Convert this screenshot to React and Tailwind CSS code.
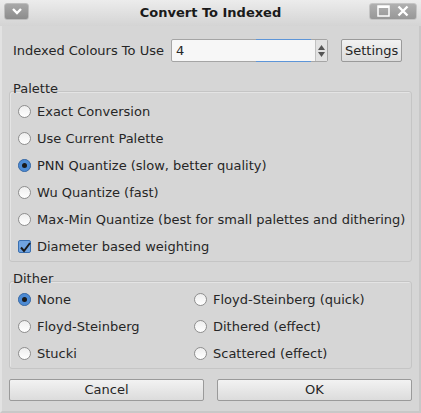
import React from "react";

function Radio({ checked }) {
  return (
    <span className="relative inline-block w-[13px] h-[13px] rounded-full border border-[#8e8e8e] bg-gradient-to-b from-[#eeeeee] to-[#ffffff] shrink-0">
      {checked && (
        <span className="absolute inset-[-1px] rounded-full bg-[#4d8bd4] border border-[#3a6fb0] flex items-center justify-center">
          <span className="w-[5px] h-[5px] rounded-full bg-[#1a1a1a]" />
        </span>
      )}
    </span>
  );
}

function Check() {
  return (
    <span className="relative inline-block w-[13px] h-[13px] rounded-[2px] border border-[#3a6fb0] bg-[#6fa3e0] shrink-0">
      <svg viewBox="0 0 13 13" className="absolute inset-0 w-[13px] h-[13px]">
        <path d="M2 6.5 L5 10 L11 2" fill="none" stroke="#1a1a1a" strokeWidth="2" />
      </svg>
    </span>
  );
}

function Item({ checked, label, box }) {
  return (
    <div className="flex items-center gap-[6px] h-[27px]">
      {box ? <Check /> : <Radio checked={checked} />}
      <span>{label}</span>
    </div>
  );
}

export default function App() {
  return (
    <div
      className="w-[421px] h-[413px] bg-[#d6d6d6] text-[13px] text-[#262626] flex flex-col"
      style={{ fontFamily: '"DejaVu Sans", sans-serif' }}
    >
      {/* Title bar */}
      <div className="h-[26px] bg-gradient-to-b from-[#ececec] to-[#d4d4d4] flex items-center justify-between pl-[4px] pr-[4px] relative shrink-0">
        <div className="w-[25px] h-[17px] mt-[-4px] rounded-[3px] bg-gradient-to-b from-[#a8a8a8] to-[#8c8c8c] border border-[#bdbdbd] flex items-center justify-center">
          <svg width="12" height="8" viewBox="0 0 12 8">
            <path d="M2 2 L6 6 L10 2" fill="none" stroke="#fff" strokeWidth="2.4" />
          </svg>
        </div>
        <div className="absolute left-0 right-0 top-[3px] text-center font-bold text-[13px] text-[#1a1a1a] pointer-events-none">
          Convert To Indexed
        </div>
        <div className="w-[48px] h-[17px] mt-[-4px] rounded-[3px] bg-gradient-to-b from-[#b0b0b0] to-[#979797] border border-[#c4c4c4] flex items-center justify-around px-[4px]">
          <svg width="13" height="12" viewBox="0 0 13 12">
            <rect x="1" y="1" width="11" height="10" fill="none" stroke="#fff" strokeWidth="1.5" />
            <line x1="1" y1="2" x2="12" y2="2" stroke="#fff" strokeWidth="2" />
          </svg>
          <svg width="12" height="12" viewBox="0 0 12 12">
            <path d="M1.5 1.5 L10.5 10.5 M10.5 1.5 L1.5 10.5" stroke="#fff" strokeWidth="2.4" />
          </svg>
        </div>
      </div>

      {/* Body */}
      <div className="flex-1 flex flex-col px-[7px] border-l-2 border-r-2 border-b-2 border-l-[#e2e2e2] border-r-[#c8c8c8] border-b-[#c8c8c8]">
        <div className="flex items-center mt-[13px] h-[23px]">
          <span className="ml-[4px] w-[158px]">Indexed Colours To Use</span>
          <div className="w-[157px] h-[23px] bg-[#f7f7f7] border border-[#a5a5a5] rounded-[2px] flex items-center relative">
            <span className="pl-[4px] flex-1">4</span>
            <div className="absolute left-[84px] right-[16px] bottom-[-1px] h-[1px] bg-[#5d95d8]" />
            <div className="absolute left-[84px] right-[16px] top-[-1px] h-[1px] bg-[#5d95d8]" />
            <div className="w-[12px] h-full border-l border-[#c2c2c2] bg-[#e2e2e2] flex flex-col items-center justify-center gap-[2px]">
              <svg width="7" height="5" viewBox="0 0 7 5"><path d="M3.5 0 L7 5 L0 5Z" fill="#555" /></svg>
              <svg width="7" height="5" viewBox="0 0 7 5"><path d="M0 0 L7 0 L3.5 5Z" fill="#555" /></svg>
            </div>
          </div>
          <button className="ml-[13px] h-[23px] px-[3px] border border-[#9a9a9a] rounded-[2px] bg-gradient-to-b from-[#f2f2f2] to-[#dcdcdc]">
            Settings
          </button>
        </div>

        {/* Palette group */}
        <div className="mt-[20px] relative">
          <div className="pl-[4px] leading-[14px] h-[9px]">Palette</div>
          <div className="border border-[#c5c5c5] rounded-[3px] pt-[6px] pb-[1px] pl-[8px] shadow-[inset_1px_1px_0_#e4e4e4]">
            <Item label="Exact Conversion" />
            <Item label="Use Current Palette" />
            <Item checked label="PNN Quantize (slow, better quality)" />
            <Item label="Wu Quantize (fast)" />
            <Item label="Max-Min Quantize (best for small palettes and dithering)" />
            <Item box label="Diameter based weighting" />
          </div>
        </div>

        {/* Dither group */}
        <div className="mt-[10px] relative">
          <div className="pl-[4px] leading-[14px] h-[9px]">Dither</div>
          <div className="border border-[#c5c5c5] rounded-[3px] pt-[4px] pb-[1px] pl-[8px] grid grid-cols-[176px_1fr] shadow-[inset_1px_1px_0_#e4e4e4]">
            <Item checked label="None" />
            <Item label="Floyd-Steinberg (quick)" />
            <Item label="Floyd-Steinberg" />
            <Item label="Dithered (effect)" />
            <Item label="Stucki" />
            <Item label="Scattered (effect)" />
          </div>
        </div>

        {/* Buttons */}
        <div className="mt-[10px] flex gap-[13px]">
          <button className="flex-1 h-[22px] border border-[#9a9a9a] rounded-[2px] bg-gradient-to-b from-[#f2f2f2] to-[#dcdcdc]">
            Cancel
          </button>
          <button className="flex-1 h-[22px] border border-[#9a9a9a] rounded-[2px] bg-gradient-to-b from-[#f2f2f2] to-[#dcdcdc]">
            OK
          </button>
        </div>
      </div>
    </div>
  );
}
